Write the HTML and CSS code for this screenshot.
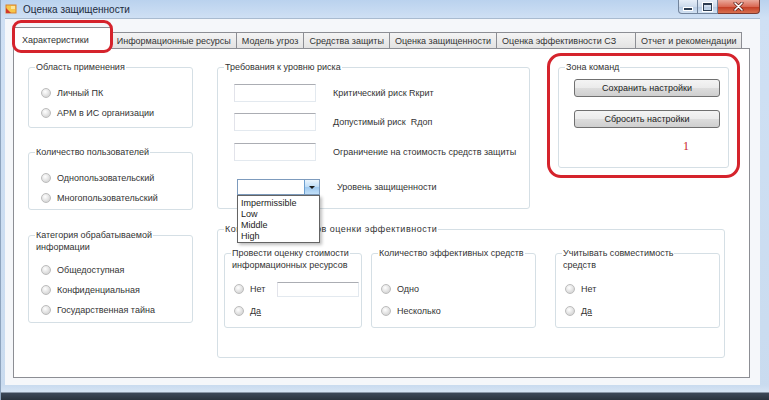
FILE: index.html
```html
<!DOCTYPE html>
<html lang="ru">

<head>
    <meta charset="UTF-8">
    <title>Оценка защищенности</title>
    <link rel="stylesheet" href="styles.css">
</head>

<body>
    <div class="window">
        <div class="titlebar">
            <svg class="app-icon" width="12" height="10" viewBox="0 0 12 10">
                <rect x="1" y="1" width="10" height="8" fill="#f6c64a" stroke="#d9822b" stroke-width="1"/>
                <polygon points="1,9 1,4 6,9" fill="#d2382a"/>
                <rect x="6" y="2" width="4" height="3" fill="#fbe59a"/>
            </svg>
            <span class="title">Оценка защищенности</span>
            <div class="controls">
                <span class="ctl ctl-min"><i class="ico-min"></i></span>
                <span class="ctl ctl-max"><i class="ico-max"></i></span>
                <span class="ctl ctl-close">
                    <svg width="11" height="9" viewBox="0 0 11 9">
                        <path d="M2 1 L9 8 M9 1 L2 8" stroke="#5a1a12" stroke-width="3" stroke-linecap="round"/>
                        <path d="M2 1 L9 8 M9 1 L2 8" stroke="#ffffff" stroke-width="1.6" stroke-linecap="round"/>
                    </svg>
                </span>
            </div>
        </div>

        <div class="client">
            <div class="tabs">
                <div class="tab active">Характеристики</div>
                <div class="tab">Информационные ресурсы</div>
                <div class="tab">Модель угроз</div>
                <div class="tab">Средства защиты</div>
                <div class="tab">Оценка защищенности</div>
                <div class="tab tab-long">Оценка эффективности СЗ</div>
                <div class="tab">Отчет и рекомендации</div>
            </div>

            <div class="tabpage">
                <div class="col-left">
                    <fieldset class="group g-scope">
                        <legend>Область применения</legend>
                        <div class="options">
                            <label class="radio"><span class="dot"></span>Личный ПК</label>
                            <label class="radio"><span class="dot"></span>АРМ в ИС организации</label>
                        </div>
                    </fieldset>
                    <fieldset class="group g-users">
                        <legend>Количество пользователей</legend>
                        <div class="options">
                            <label class="radio"><span class="dot"></span>Однопользовательский</label>
                            <label class="radio"><span class="dot"></span>Многопользовательский</label>
                        </div>
                    </fieldset>
                    <fieldset class="group g-info">
                        <legend>Категория обрабатываемой<br>информации</legend>
                        <div class="options options-low">
                            <label class="radio"><span class="dot"></span>Общедоступная</label>
                            <label class="radio"><span class="dot"></span>Конфиденциальная</label>
                            <label class="radio"><span class="dot"></span>Государственная тайна</label>
                        </div>
                    </fieldset>
                </div>

                <div class="col-right">
                    <div class="row-top">
                        <fieldset class="group g-risk">
                            <legend>Требования к уровню риска</legend>
                            <div class="field-row">
                                <span class="textbox"></span>
                                <span class="field-label">Критический риск Rкрит</span>
                            </div>
                            <div class="field-row">
                                <span class="textbox"></span>
                                <span class="field-label">Допустимый риск&nbsp; Rдоп</span>
                            </div>
                            <div class="field-row field-row-cost">
                                <span class="textbox"></span>
                                <span class="field-label">Ограничение на стоимость средств защиты</span>
                            </div>
                            <div class="field-row field-row-level">
                                <div class="combo">
                                    <span class="combo-btn"></span>
                                    <div class="combo-list">
                                        <div>Impermissible</div>
                                        <div>Low</div>
                                        <div>Middle</div>
                                        <div>High</div>
                                    </div>
                                </div>
                                <span class="field-label">Уровень защищенности</span>
                            </div>
                        </fieldset>

                        <fieldset class="group g-cmd">
                            <legend>Зона команд</legend>
                            <button class="btn">Сохранить настройки</button>
                            <button class="btn">Сбросить настройки</button>
                        </fieldset>
                    </div>

                    <fieldset class="group g-eff">
                        <legend>Комплекс параметров оценки эффективности</legend>
                        <div class="eff-row">
                            <fieldset class="group g-cost">
                                <legend>Провести оценку стоимости<br>информационных ресурсов</legend>
                                <div class="sub-options">
                                    <label class="radio"><span class="dot"></span>Нет<span class="textbox textbox-sm"></span></label>
                                    <label class="radio"><span class="dot"></span><u>Да</u></label>
                                </div>
                            </fieldset>
                            <fieldset class="group g-count">
                                <legend>Количество эффективных средств</legend>
                                <div class="sub-options">
                                    <label class="radio"><span class="dot"></span>Одно</label>
                                    <label class="radio"><span class="dot"></span>Несколько</label>
                                </div>
                            </fieldset>
                            <fieldset class="group g-compat">
                                <legend>Учитывать совместимость<br>средств</legend>
                                <div class="sub-options">
                                    <label class="radio"><span class="dot"></span>Нет</label>
                                    <label class="radio"><span class="dot"></span><u>Да</u></label>
                                </div>
                            </fieldset>
                        </div>
                    </fieldset>
                </div>
            </div>
        </div>

        <div class="frame-bottom"></div>

        <!-- пометки поверх скриншота -->
        <div class="mark mark-tab"></div>
        <div class="mark mark-cmd"><span class="mark-num">1</span></div>
    </div>
</body>

</html>
```

FILE: styles.css
```css
html,
body {
    margin: 0;
}

body {
    width: 769px;
    height: 400px;
    overflow: hidden;
    font-family: "Liberation Sans", Arial, sans-serif;
    font-size: 9px;
    color: #333333;
    background: #2f3a46;
}

.window {
    position: relative;
    height: 400px;
    display: flex;
    flex-direction: column;
    box-sizing: border-box;
    border-left: 1px solid #8ea4be;
    background: linear-gradient(to bottom, #bad2ee, #cfe0f4 18px, #c9dbef);
}

/* заголовок окна */
.titlebar {
    height: 18px;
    display: flex;
    align-items: center;
    padding-left: 4px;
}

.app-icon {
    margin-right: 6px;
}

.title {
    font-size: 10px;
    color: #1c2b3c;
}

.controls {
    margin-left: auto;
    margin-right: 9px;
    align-self: flex-start;
    display: flex;
}

.ctl {
    width: 20px;
    height: 14px;
    box-sizing: border-box;
    border: 1px solid #72849c;
    border-top: none;
    border-left: none;
    background: linear-gradient(to bottom, #e6eef8, #cddbec 50%, #b6cae2 51%, #d3e2f3);
    display: flex;
    align-items: center;
    justify-content: center;
}

.ctl-min {
    border-left: 1px solid #72849c;
    border-bottom-left-radius: 4px;
}

.ico-min {
    width: 8px;
    height: 2px;
    margin-top: 4px;
    background: #2d3d52;
    border: 1px solid #ffffff;
}

.ico-max {
    width: 7px;
    height: 5px;
    border: 1px solid #2d3d52;
    border-top-width: 2px;
    box-shadow: 0 0 0 1px #ffffff;
}

.ctl-close {
    width: 42px;
    border-color: #7b3b31;
    border-bottom-right-radius: 4px;
    background: linear-gradient(to bottom, #eaa99b, #d96a55 50%, #c23a22 51%, #d8704f);
}

/* клиентская область */
.client {
    height: 367px;
    margin: 0 9px 0 4px;
    padding: 0 10px 7px 8px;
    box-sizing: border-box;
    background: #f5f7fa;
    border-top: 1px solid #a9bbd0;
    display: flex;
    flex-direction: column;
}

.tabs {
    height: 29px;
    display: flex;
    align-items: flex-end;
}

.tab {
    height: 16px;
    box-sizing: border-box;
    padding: 0 5px;
    margin-left: -1px;
    border: 1px solid #8c8e94;
    border-bottom: none;
    background: linear-gradient(to bottom, #f4f4f4, #e3e3e3);
    display: flex;
    align-items: center;
    white-space: nowrap;
}

.tab.active {
    height: 22px;
    margin-left: 0;
    margin-bottom: -1px;
    padding: 2px 22px 0 8px;
    position: relative;
    z-index: 1;
    background: #ffffff;
}

.tab-long {
    padding-right: 19px;
}

.tabpage {
    height: 330px;
    box-sizing: border-box;
    padding: 12px 0 0 14px;
    background: #ffffff;
    border: 1px solid #8c8e94;
    display: grid;
    grid-template-columns: 165px 1fr;
    column-gap: 24px;
    align-items: start;
}

.col-left,
.col-right {
    display: flex;
    flex-direction: column;
}

.row-top {
    display: flex;
}

/* групповые рамки */
.group {
    margin: 0;
    padding: 0 0 0 6px;
    min-width: 0;
    box-sizing: border-box;
    border: 1px solid #d5dfe5;
    border-radius: 3px;
}

.group legend {
    padding: 0 1px;
    height: 12px;
    line-height: 12px;
    white-space: nowrap;
}

.g-scope {
    height: 67px;
}

.g-users {
    height: 64px;
    margin-top: 18px;
}

.g-info {
    height: 94px;
    margin-top: 19px;
}

.options {
    display: flex;
    flex-direction: column;
    gap: 4px;
    margin: 12px 0 0 6px;
}

.options-low {
    margin-top: 21px;
}

.radio {
    height: 16px;
    display: flex;
    align-items: center;
    white-space: nowrap;
}

.dot {
    width: 10px;
    height: 10px;
    margin-right: 6px;
    box-sizing: border-box;
    border-radius: 50%;
    border: 1px solid #bcbcbc;
    background: radial-gradient(circle at 40% 35%, #ffffff, #d9d9d9 70%);
    flex-shrink: 0;
}

.radio u {
    text-decoration-color: #555555;
}

/* требования к риску */
.g-risk {
    width: 313px;
    height: 148px;
}

.field-row {
    display: flex;
    align-items: center;
    gap: 17px;
    margin: 11px 0 0 10px;
}

.field-row-cost {
    margin-top: 12px;
}

.field-row-level {
    margin-top: 18px;
}

.textbox {
    width: 82px;
    height: 18px;
    box-sizing: border-box;
    background: #ffffff;
    border: 1px solid;
    border-color: #abadb3 #e3e9ef #e3e9ef #e2e3ea;
    flex-shrink: 0;
}

.textbox-sm {
    height: 15px;
    margin-left: auto;
    margin-right: 2px;
}

.combo {
    position: relative;
    width: 83px;
    height: 16px;
    margin-left: 3px;
    box-sizing: border-box;
    border: 1px solid #7d9bbd;
    background: #ffffff;
    display: flex;
    justify-content: flex-end;
}

.combo-btn {
    width: 14px;
    border-left: 1px solid #6d9fcf;
    background: linear-gradient(to bottom, #eaf4fd, #bddcf6 50%, #9dc8ef 51%, #c2e0f8);
    display: flex;
    align-items: center;
    justify-content: center;
}

.combo-btn::after {
    content: "";
    border-left: 3px solid transparent;
    border-right: 3px solid transparent;
    border-top: 3px solid #1a1a1a;
}

.combo-list {
    position: absolute;
    top: 15px;
    left: -1px;
    width: 83px;
    height: 48px;
    box-sizing: border-box;
    padding: 2px 0 0 3px;
    background: #ffffff;
    border: 1px solid #646464;
    box-shadow: 2px 2px 3px rgba(0, 0, 0, 0.25);
    font-size: 9px;
    line-height: 11px;
    color: #222222;
    z-index: 5;
}

/* зона команд */
.g-cmd {
    width: 171px;
    height: 107px;
    margin-left: 28px;
}

.btn {
    display: block;
    width: 146px;
    height: 18px;
    margin: 6px 0 0 9px;
    padding: 0;
    box-sizing: border-box;
    border: 1px solid #707070;
    border-radius: 3px;
    background: linear-gradient(to bottom, #f4f4f4, #ebebeb 50%, #dddddd 51%, #cfcfcf);
    font-family: inherit;
    font-size: 9px;
    color: #222222;
}

.btn + .btn {
    margin-top: 13px;
}

/* оценка эффективности */
.g-eff {
    width: 508px;
    height: 135px;
    margin-top: 14px;
}

.g-eff > legend {
    letter-spacing: 0.5px;
}

.eff-row {
    display: flex;
    margin-top: 12px;
}

.g-cost {
    width: 138px;
    height: 81px;
}

.g-count {
    width: 165px;
    height: 81px;
    margin-left: 9px;
}

.g-compat {
    width: 165px;
    height: 81px;
    margin-left: 19px;
}

.sub-options {
    display: flex;
    flex-direction: column;
    gap: 6px;
    margin: 22px 0 0 3px;
}

.frame-bottom {
    height: 15px;
    background: linear-gradient(to bottom, #c9dbef 0, #d6e4f4 7px, #3c4858 8px, #2a333e);
}

/* красные пометки */
.mark {
    position: absolute;
    box-sizing: border-box;
    border: 3px solid #d5232c;
}

.mark-tab {
    left: 11px;
    top: 20px;
    width: 101px;
    height: 33px;
    border-radius: 9px;
    z-index: 3;
}

.mark-cmd {
    left: 546px;
    top: 53px;
    width: 193px;
    height: 125px;
    border-radius: 14px;
}

.mark-num {
    position: absolute;
    left: 133px;
    top: 84px;
    font-family: "Liberation Serif", serif;
    font-size: 12px;
    line-height: 12px;
    color: #c8262b;
}
```
